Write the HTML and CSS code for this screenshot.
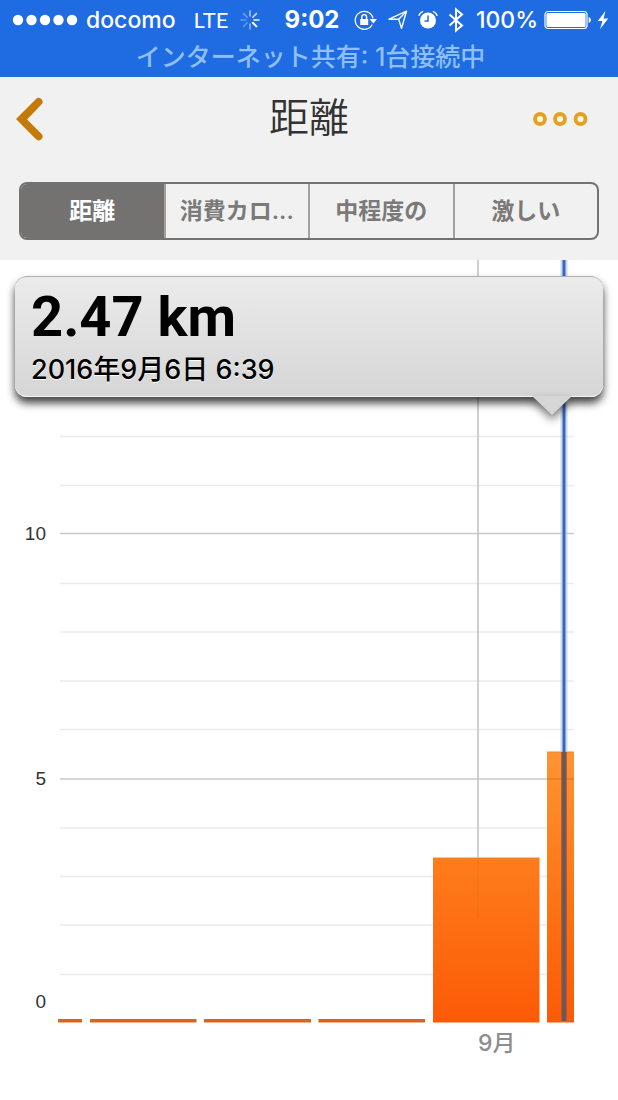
FILE: index.html
```html
<!DOCTYPE html>
<html lang="ja">
<head>
<meta charset="utf-8">
<meta name="viewport" content="width=device-width, initial-scale=1">
<title>距離</title>
<link rel="stylesheet" href="styles.css">
</head>
<body>
<div class="status">
  <div class="status-row">
    <svg class="signal" width="66" height="14" viewBox="0 0 66 14" fill="#fff" aria-hidden="true"><circle cx="6" cy="7" r="5.2"/><circle cx="19.500" cy="7" r="5.200"/><circle cx="33" cy="7" r="5.200"/><circle cx="46.500" cy="7" r="5.200"/><circle cx="60" cy="7" r="5.200"/></svg>
    <span class="carrier">docomo</span>
    <span class="network">LTE</span>
    <svg class="spinner" width="20" height="20" viewBox="0 0 20 20" stroke="#fff" stroke-width="1.500" stroke-linecap="round" aria-hidden="true">
      <path d="M10 1v5" opacity=".65"/><path d="M16.400 3.600 12.800 7.200" opacity=".8"/><path d="M19 10h-5" opacity=".95"/><path d="m16.400 16.400-3.600-3.600" stroke-width="2"/><path d="M10 19v-5" opacity=".5"/><path d="m3.600 16.400 3.600-3.600" opacity=".3"/><path d="M1 10h5" opacity=".3"/><path d="m3.600 3.600 3.600 3.600" opacity=".35"/>
    </svg>
    <span class="time">9:02</span>
    <div class="indicators">
      <svg width="24" height="20" viewBox="0 0 24 20" fill="none" stroke="#fff" aria-hidden="true"><path d="M18.200 14.500A9 9 0 1 1 19 8.500" stroke-width="1.300"/><path d="M15.500 9h7.500l-3.700 4.500z" fill="#fff" stroke="none"/><path d="M6.200 9h8v6h-8z" fill="#fff" stroke="none"/><path d="M7.800 9V7a2.400 2.400 0 0 1 4.800 0v2" stroke-width="1.400"/></svg>
      <svg width="20" height="20" viewBox="0 0 20 20" fill="none" stroke="#fff" stroke-width="1.400" stroke-linejoin="round" aria-hidden="true"><path d="M18.500 1.200 1 9.200h9.700l2.800 9z"/><path d="m10.700 9.200 7.800-8"/></svg>
      <svg width="20" height="20" viewBox="0 0 20 20" aria-hidden="true"><circle cx="10" cy="10.500" r="8" fill="#fff"/><path d="M10 5.500v5.500H6.500" fill="none" stroke="#1e6be2" stroke-width="1.500"/><path d="M1 5.300C1.600 3.600 2.900 2.300 4.600 1.600M19 5.300c-.6-1.700-1.900-3-3.600-3.700" fill="none" stroke="#fff" stroke-width="1.500" stroke-linecap="round"/></svg>
      <svg width="16" height="26" viewBox="0 0 16 26" fill="none" stroke="#fff" stroke-width="2" aria-hidden="true"><path d="m1.500 7.500 12.500 11L8 23.500v-21l6 5-12.500 11"/></svg>
    </div>
    <span class="percent">100%</span>
    <svg class="battery" width="48" height="20" viewBox="0 0 48 20" aria-hidden="true"><rect x="1" y="1.500" width="42" height="17" rx="3" fill="none" stroke="#fff" stroke-width="1.200"/><rect x="2.400" y="2.900" width="39.200" height="14.200" rx="1.500" fill="#fff"/><path d="M44.600 7c3 1 3 5 0 6z" fill="#fff"/></svg>
    <svg class="bolt" width="12" height="20" viewBox="0 0 12 20" fill="#fff" aria-hidden="true"><path d="M8.500.8.800 11h4.600L3 19.200 11.200 8.600H6.600z"/></svg>
  </div>
  <div class="sharing">インターネット共有: 1台接続中</div>
</div>

<header class="header">
  <div class="titlebar">
    <button class="icon-button" aria-label="戻る"><svg width="30" height="44" viewBox="0 0 30 44" fill="#c57a08" aria-hidden="true"><path d="M1 22 20.800 2.200a3.800 3.800 0 0 1 5.600 5.400L12 22.500l14.400 14.200a3.800 3.800 0 0 1-5.600 5.400z"/></svg></button>
    <h1 class="title">距離</h1>
    <button class="icon-button" aria-label="メニュー"><svg width="56" height="16" viewBox="0 0 56 16" fill="#fff8d8" stroke="#e5a024" stroke-width="3.800" aria-hidden="true"><circle cx="8" cy="8" r="5"/><circle cx="28" cy="8" r="5"/><circle cx="48.500" cy="8" r="5"/></svg></button>
  </div>
  <nav class="tabs">
    <button class="tab tab-active" aria-pressed="true">距離</button>
    <button class="tab" aria-pressed="false">消費カロ...</button>
    <button class="tab" aria-pressed="false">中程度の</button>
    <button class="tab" aria-pressed="false">激しい</button>
  </nav>
</header>

<main class="chart">
  <svg class="plot" viewBox="0 0 618 840" role="img" aria-label="距離の推移">
    <defs>
      <linearGradient id="bar" gradientUnits="userSpaceOnUse" x1="0" y1="492" x2="0" y2="762"><stop offset="0" stop-color="#ff9434"/><stop offset=".4" stop-color="#fe7c1c"/><stop offset="1" stop-color="#fc5a06"/></linearGradient>
    </defs>
    <path d="M60 176.500H574M60 225.500H574M60 323.500H574M60 372H574M60 421H574M60 469.500H574M60 568H574M60 616.500H574M60 665H574M60 714.500H574" stroke="#ebebeb" stroke-width="1.500"/>
    <path d="M60 273.500H574M60 519H574" stroke="#c9c9c9" stroke-width="1.600"/>
    <path d="M58 759h24v3.500H58zM90 759h106.500v3.500H90zM204 759h107v3.500H204zM318.500 759h106.500v3.500H318.500z" fill="#d9641a"/>
    <path d="M433 598h106.500v164.500H433zM547 492h27v270.500h-27z" fill="url(#bar)"/>
    <path d="M433 598h106.500M547 492h27" stroke="#e98a20" stroke-width="1"/>
    <path d="M478 0v598" stroke="#c4c4c4" stroke-width="1.600"/>
    <path d="M478 598v60" stroke="#a05010" stroke-width="1.500" opacity=".1"/>
    <path d="M547 519h27" stroke="#b56420" stroke-width="1.200" opacity=".5"/>
    <path d="M564 0v492" stroke="#b4cbf2" stroke-width="7" opacity=".7"/>
    <path d="M564 0v492" stroke="#3c69b4" stroke-width="3"/>
    <path d="M564 492v269" stroke="#a4582e" stroke-width="6" opacity=".8"/>
    <path d="M564 492v269" stroke="#65595f" stroke-width="3.500"/>
    <g class="axis" text-anchor="end"><text x="46" y="280">10</text><text x="46" y="525">5</text><text x="46" y="748">0</text></g>
    <text class="month" x="478" y="791">9月</text>
  </svg>
  <section class="callout">
    <p class="value">2.47 km</p>
    <p class="date">2016年9月6日 6:39</p>
    <svg class="pointer" width="40" height="20" viewBox="0 0 40 20" aria-hidden="true"><path d="M0 0h40L20 19z" fill="#d6d6d6"/></svg>
  </section>
</main>
</body>
</html>
```

FILE: styles.css
```css
* { box-sizing: border-box; }

body {
  margin: 0;
  background: #fff;
  font-family: Inter, "Noto Sans CJK JP", sans-serif;
}

h1, p { margin: 0; }
button { margin: 0; padding: 0; border: 0; background: none; font-family: inherit; }
svg { display: block; flex: none; }

.status { background: #1e6be2; color: #fff; padding: 4px 9px 4px 12px; }
.status-row { display: flex; align-items: center; height: 32px; font-size: 23px; line-height: 32px; white-space: nowrap; }
.carrier { margin-left: 8px; font-weight: 500; }
.network { margin-left: 18px; font-family: Lato, sans-serif; font-size: 22px; font-weight: 400; }
.spinner { margin-left: 11px; }
.time { margin-left: 25px; font-size: 24px; font-weight: 700; }
.indicators { display: flex; align-items: center; gap: 10px; margin-left: auto; }
.percent { margin-left: 12px; font-weight: 500; }
.battery { margin-left: 6px; }
.bolt { margin-left: 5px; }
.sharing { height: 37px; line-height: 43px; font-size: 25px; font-weight: 500; text-align: center; color: #8fc0fb; }

.header { background: #f1f1f1; padding: 7px 19px 20px; }
.titlebar { display: grid; grid-template-columns: 70px 1fr 70px; align-items: center; height: 70px; }
.icon-button { justify-self: start; }
.icon-button:first-child { margin-left: -4px; }
.icon-button:last-child { justify-self: end; margin-right: 11px; }
.title { text-align: center; font-family: "Noto Sans CJK JP", sans-serif; font-size: 40px; line-height: 60px; font-weight: 350; color: #333; padding-bottom: 8px; }

.tabs { display: flex; height: 58px; margin-top: 28px; border: 2px solid #737271; border-radius: 8px; overflow: hidden; }
.tab { flex: 1; border-right: 2px solid #a2a1a0; font-size: 23px; line-height: 32px; font-weight: 600; color: #7b7a79; white-space: nowrap; }
.tab:last-child { border-right: 0; }
.tab-active { background: #737271; color: #fff; }

.chart { position: relative; }
.plot { width: 100%; height: auto; }
.axis { font-family: "Liberation Sans", sans-serif; font-size: 19px; fill: #333; }
.month { font-size: 23px; font-weight: 500; fill: #8d8d8d; }

.callout {
  position: absolute;
  top: 16px;
  left: 15px;
  right: 15px;
  padding: 8px 16px;
  border-top: 1px solid #b0b0b0;
  border-bottom: 1px solid #f5f5f5;
  border-radius: 12px;
  background: linear-gradient(#ebebeb, #d6d6d6);
  box-shadow: 0 6px 9px rgba(0, 0, 0, .75);
  color: #000;
}
.value { font-size: 56px; line-height: 64px; font-weight: 700; font-family: Roboto, sans-serif; }
.date { padding-top: 3px; font-size: 27px; line-height: 36px; font-weight: 500; text-shadow: 0 1px 0 #fff; }
.pointer { position: absolute; right: 31px; bottom: -20px; filter: drop-shadow(0 5px 4px rgba(0, 0, 0, .5)); }
```
